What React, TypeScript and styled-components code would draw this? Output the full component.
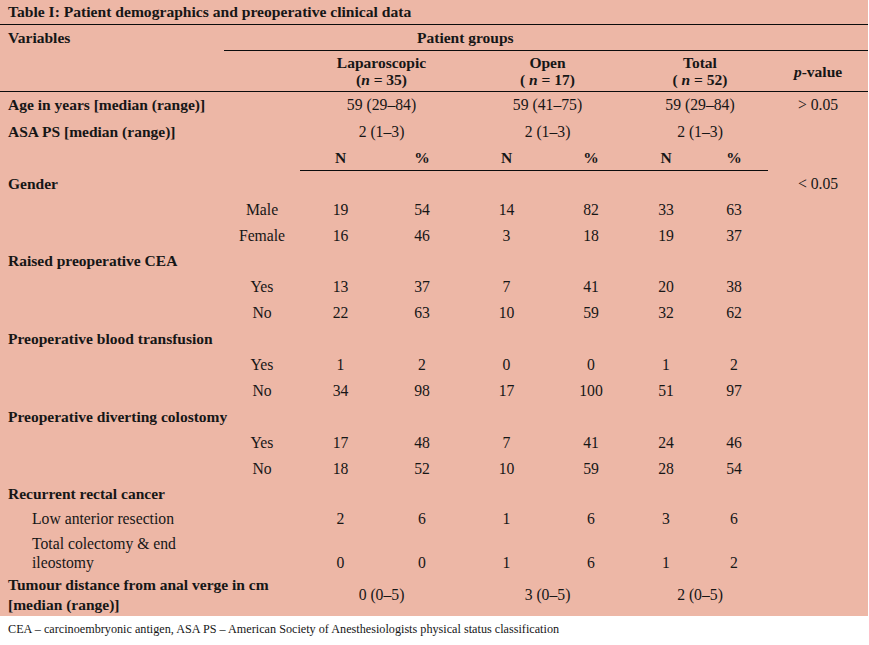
import styled, { createGlobalStyle } from 'styled-components'

const GlobalStyle = createGlobalStyle`
  html, body {
    margin: 0;
    padding: 0;
    background: #fff;
  }
  body {
    font-family: 'Liberation Serif', 'Times New Roman', serif;
    color: #161616;
  }
`

type Pair = [string, string, string, string, string, string]

const groups = [
  { title: 'Gender', h: 26, p: '< 0.05', rows: [
    { label: 'Male', h: 26, v: ['19', '54', '14', '82', '33', '63'] as Pair },
    { label: 'Female', h: 25, v: ['16', '46', '3', '18', '19', '37'] as Pair },
  ] },
  { title: 'Raised preoperative CEA', h: 25, rows: [
    { label: 'Yes', h: 27, v: ['13', '37', '7', '41', '20', '38'] as Pair },
    { label: 'No', h: 26, v: ['22', '63', '10', '59', '32', '62'] as Pair },
  ] },
  { title: 'Preoperative blood transfusion', h: 26, rows: [
    { label: 'Yes', h: 26, v: ['1', '2', '0', '0', '1', '2'] as Pair },
    { label: 'No', h: 26, v: ['34', '98', '17', '100', '51', '97'] as Pair },
  ] },
  { title: 'Preoperative diverting colostomy', h: 26, rows: [
    { label: 'Yes', h: 26, v: ['17', '48', '7', '41', '24', '46'] as Pair },
    { label: 'No', h: 26, v: ['18', '52', '10', '59', '28', '54'] as Pair },
  ] },
]

export default function App() {
  return (
    <Page>
      <GlobalStyle />
      <Table>
        <colgroup>
          {[224, 76, 81, 82, 87, 82, 68, 68, 100].map((w, i) => (
            <col key={i} style={{ width: w }} />
          ))}
        </colgroup>
        <tbody>
          <Row $h={24} $line>
            <Title colSpan={9}>Table I: Patient demographics and preoperative clinical data</Title>
          </Row>
          <Row $h={26}>
            <Cell $bold>Variables</Cell>
            <GroupHead colSpan={8}>Patient groups</GroupHead>
          </Row>
          <Row $h={41} $line>
            <Cell colSpan={2} />
            <Head colSpan={2}>Laparoscopic<br />(<i>n</i> = 35)</Head>
            <Head colSpan={2}>Open<br />( <i>n</i> = 17)</Head>
            <Head colSpan={2}>Total<br />( <i>n</i> = 52)</Head>
            <Head><i>p</i>-value</Head>
          </Row>
          <Row $h={26}>
            <Cell $bold colSpan={2}>Age in years [median (range)]</Cell>
            <Cell $center colSpan={2}>59 (29–84)</Cell>
            <Cell $center colSpan={2}>59 (41–75)</Cell>
            <Cell $center colSpan={2}>59 (29–84)</Cell>
            <Cell $center>&gt; 0.05</Cell>
          </Row>
          <Row $h={27}>
            <Cell $bold colSpan={2}>ASA PS [median (range)]</Cell>
            <Cell $center colSpan={2}>2 (1–3)</Cell>
            <Cell $center colSpan={2}>2 (1–3)</Cell>
            <Cell $center colSpan={2}>2 (1–3)</Cell>
            <Cell />
          </Row>
          <Row $h={26}>
            <Cell colSpan={2} />
            {['N', '%', 'N', '%', 'N', '%'].map((t, i) => (
              <Cell key={i} $center $bold $under>{t}</Cell>
            ))}
            <Cell />
          </Row>
          {groups.map((g) => (
            <>
              <Row key={g.title} $h={g.h}>
                <Cell $bold colSpan={2}>{g.title}</Cell>
                <Cell colSpan={6} />
                <Cell $center>{g.p ?? ''}</Cell>
              </Row>
              {g.rows.map((r, i) => (
                <Row key={g.title + i} $h={r.h}>
                  <Cell />
                  <Cell $center>{r.label}</Cell>
                  {r.v.map((v, j) => (
                    <Cell key={j} $center>{v}</Cell>
                  ))}
                  <Cell />
                </Row>
              ))}
            </>
          ))}
          <Row $h={24}>
            <Cell $bold colSpan={2}>Recurrent rectal cancer</Cell>
            <Cell colSpan={7} />
          </Row>
          <Row $h={26}>
            <Cell $indent colSpan={2}>Low anterior resection</Cell>
            {['2', '6', '1', '6', '3', '6'].map((v, j) => (
              <Cell key={j} $center>{v}</Cell>
            ))}
            <Cell />
          </Row>
          <Row $h={42}>
            <Cell $indent><Wrap>Total colectomy &amp; end ileostomy</Wrap></Cell>
            <Cell />
            {['0', '0', '1', '6', '1', '2'].map((v, j) => (
              <Cell key={j} $center $bottom>{v}</Cell>
            ))}
            <Cell />
          </Row>
          <Row $h={42}>
            <Cell $bold colSpan={2} $tall>Tumour distance from anal verge in cm<br />[median (range)]</Cell>
            <Cell $center colSpan={2}>0 (0–5)</Cell>
            <Cell $center colSpan={2}>3 (0–5)</Cell>
            <Cell $center colSpan={2}>2 (0–5)</Cell>
            <Cell />
          </Row>
        </tbody>
      </Table>
      <Note>CEA – carcinoembryonic antigen, ASA PS – American Society of Anesthesiologists physical status classification</Note>
    </Page>
  )
}

const Page = styled.div`
  width: 869px;
  height: 645px;
  background: #fff;
`

const Table = styled.table`
  width: 868px;
  table-layout: fixed;
  border-collapse: collapse;
  border-spacing: 0;
  background: #edb7a6;
  font-size: 15.7px;
`

const Row = styled.tr<{ $h: number; $line?: boolean }>`
  height: ${(p) => p.$h}px;
  border-bottom: ${(p) => (p.$line ? '1px solid #0c0c0c' : 'none')};
`

const Cell = styled.td<{
  $bold?: boolean
  $center?: boolean
  $under?: boolean
  $indent?: boolean
  $bottom?: boolean
  $tall?: boolean
}>`
  padding: 0 0 0 ${(p) => (p.$indent ? 32 : p.$center ? 0 : 8)}px;
  text-align: ${(p) => (p.$center ? 'center' : 'left')};
  font-weight: ${(p) => (p.$bold ? 700 : 400)};
  font-size: ${(p) => (p.$bold ? 15.5 : 15.7)}px;
  vertical-align: ${(p) => (p.$bottom ? 'bottom' : 'middle')};
  padding-bottom: ${(p) => (p.$bottom ? 2 : 0)}px;
  line-height: ${(p) => (p.$tall ? 20 : 19)}px;
  border-bottom: ${(p) => (p.$under ? '1px solid #0c0c0c' : 'none')};
  white-space: nowrap;
`

const Wrap = styled.div`
  width: 175px;
  white-space: normal;
  line-height: 19px;
`

const Title = styled.td`
  padding: 0 0 0 8px;
  font-weight: 700;
  font-size: 15.6px;
  line-height: 24px;
  vertical-align: middle;
`

const GroupHead = styled.td`
  padding: 0 0 0 193px;
  font-weight: 700;
  font-size: 15.5px;
  text-align: left;
  vertical-align: middle;
  border-bottom: 1px solid #0c0c0c;
`

const Head = styled.td`
  padding: 0;
  font-weight: 700;
  font-size: 15.5px;
  text-align: center;
  vertical-align: middle;
  line-height: 17px;

  i {
    font-weight: 700;
  }
`

const Note = styled.div`
  padding: 6px 0 0 8px;
  font-size: 12.2px;
  line-height: 14px;
`
